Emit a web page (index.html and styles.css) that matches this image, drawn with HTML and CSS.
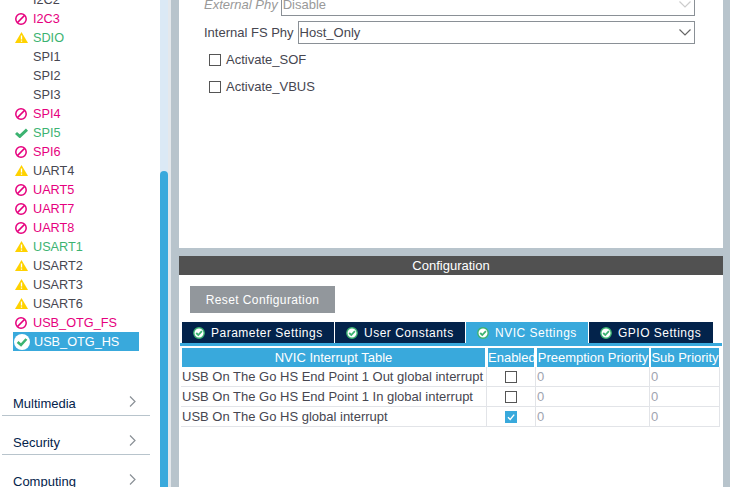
FILE: index.html
```html
<!DOCTYPE html>
<html>

<head>
    <meta charset="utf-8">
    <title>USB_OTG_HS Configuration</title>
    <link rel="stylesheet" href="styles.css">
</head>

<body>
    <svg class="defs" width="0" height="0">
        <symbol id="ban" viewBox="0 0 12 12">
            <circle cx="6" cy="6" r="5.2" fill="none" stroke="#e6007e" stroke-width="1.5" />
            <path d="M2.4 9.6 9.6 2.4" stroke="#e6007e" stroke-width="1.5" />
        </symbol>
        <symbol id="warn" viewBox="0 0 13 11">
            <path d="M6.5 0 13 11H0z" fill="#ffd200" />
            <path d="M6.5 3.5v4M6.5 8.4v1.4" stroke="#fff" stroke-width="1.3" />
        </symbol>
        <symbol id="tick" viewBox="0 0 13 10">
            <path d="M1 5 4.8 8.4 12 1.6" fill="none" stroke="#3cb371" stroke-width="3" />
        </symbol>
        <symbol id="ok" viewBox="0 0 16 16">
            <circle cx="8" cy="8" r="8" fill="#fff" />
            <path d="M3.6 8 7 11 12.4 5" fill="none" stroke="#3cb371" stroke-width="2.6" />
        </symbol>
        <symbol id="tab-ok" viewBox="0 0 12 12">
            <circle cx="6" cy="6" r="5.2" fill="#fff" stroke="#3cb371" stroke-width="1.4" />
            <path d="M3.2 6 5.3 8 8.9 4.2" fill="none" stroke="#3cb371" stroke-width="1.8" />
        </symbol>
        <symbol id="chev" viewBox="0 0 12 7">
            <path d="M.5.5 6 6 11.5.5" fill="none" stroke="currentColor" stroke-width="1.2" />
        </symbol>
        <symbol id="chev-right" viewBox="0 0 7 11">
            <path d="M1 .5 6 5.5 1 10.5" fill="none" stroke="#8a9096" stroke-width="1.2" />
        </symbol>
    </svg>

    <aside class="sidebar">
        <ul class="ip-list">
            <li class="ip-row"><span class="ip-icon"></span>I2C2</li>
            <li class="ip-row pink"><svg class="ip-icon"><use href="#ban" /></svg>I2C3</li>
            <li class="ip-row green"><svg class="ip-icon warn"><use href="#warn" /></svg>SDIO</li>
            <li class="ip-row"><span class="ip-icon"></span>SPI1</li>
            <li class="ip-row"><span class="ip-icon"></span>SPI2</li>
            <li class="ip-row"><span class="ip-icon"></span>SPI3</li>
            <li class="ip-row pink"><svg class="ip-icon"><use href="#ban" /></svg>SPI4</li>
            <li class="ip-row green"><svg class="ip-icon tick"><use href="#tick" /></svg>SPI5</li>
            <li class="ip-row pink"><svg class="ip-icon"><use href="#ban" /></svg>SPI6</li>
            <li class="ip-row"><svg class="ip-icon warn"><use href="#warn" /></svg>UART4</li>
            <li class="ip-row pink"><svg class="ip-icon"><use href="#ban" /></svg>UART5</li>
            <li class="ip-row pink"><svg class="ip-icon"><use href="#ban" /></svg>UART7</li>
            <li class="ip-row pink"><svg class="ip-icon"><use href="#ban" /></svg>UART8</li>
            <li class="ip-row green"><svg class="ip-icon warn"><use href="#warn" /></svg>USART1</li>
            <li class="ip-row"><svg class="ip-icon warn"><use href="#warn" /></svg>USART2</li>
            <li class="ip-row"><svg class="ip-icon warn"><use href="#warn" /></svg>USART3</li>
            <li class="ip-row"><svg class="ip-icon warn"><use href="#warn" /></svg>USART6</li>
            <li class="ip-row pink"><svg class="ip-icon"><use href="#ban" /></svg>USB_OTG_FS</li>
            <li class="ip-row selected"><svg class="ip-icon ok"><use href="#ok" /></svg>USB_OTG_HS</li>
        </ul>
        <div class="category first">Multimedia<svg class="chev-right"><use href="#chev-right" /></svg></div>
        <div class="category">Security<svg class="chev-right"><use href="#chev-right" /></svg></div>
        <div class="category">Computing<svg class="chev-right"><use href="#chev-right" /></svg></div>
    </aside>

    <div class="scrollbar">
        <div class="thumb"></div>
    </div>
    <div class="strip"></div>

    <main class="main">
        <section class="mode-panel">
            <div class="field disabled">
                <label>External Phy</label>
                <div class="select">Disable<svg class="chev"><use href="#chev" /></svg></div>
            </div>
            <div class="field">
                <label>Internal FS Phy</label>
                <div class="select">Host_Only<svg class="chev"><use href="#chev" /></svg></div>
            </div>
            <div class="check-row"><span class="checkbox"></span>Activate_SOF</div>
            <div class="check-row"><span class="checkbox"></span>Activate_VBUS</div>
        </section>

        <section class="config-panel">
            <h2 class="config-title">Configuration</h2>
            <button class="reset-button">Reset Configuration</button>
            <div class="tabs">
                <div class="tab tab-params"><svg class="tab-icon"><use href="#tab-ok" /></svg>Parameter Settings</div>
                <div class="tab tab-const"><svg class="tab-icon"><use href="#tab-ok" /></svg>User Constants</div>
                <div class="tab tab-nvic active"><svg class="tab-icon"><use href="#tab-ok" /></svg>NVIC Settings</div>
                <div class="tab tab-gpio"><svg class="tab-icon"><use href="#tab-ok" /></svg>GPIO Settings</div>
            </div>
            <div class="tab-line"></div>
            <table class="nvic-table">
                <colgroup>
                    <col class="col-name">
                    <col class="col-enabled">
                    <col class="col-pre">
                    <col class="col-sub">
                </colgroup>
                <thead>
                    <tr>
                        <th class="th-name">NVIC Interrupt Table</th>
                        <th class="th-enabled">Enabled</th>
                        <th>Preemption Priority</th>
                        <th>Sub Priority</th>
                    </tr>
                </thead>
                <tbody>
                    <tr>
                        <td>USB On The Go HS End Point 1 Out global interrupt</td>
                        <td class="cell-check"><span class="checkbox"></span></td>
                        <td class="cell-num">0</td>
                        <td class="cell-num">0</td>
                    </tr>
                    <tr>
                        <td>USB On The Go HS End Point 1 In global interrupt</td>
                        <td class="cell-check"><span class="checkbox"></span></td>
                        <td class="cell-num">0</td>
                        <td class="cell-num">0</td>
                    </tr>
                    <tr>
                        <td>USB On The Go HS global interrupt</td>
                        <td class="cell-check">
                            <span class="checkbox checked"><svg viewBox="0 0 12 12"><path d="M3 6.2 5.2 8.4 9.2 3.6" fill="none" stroke="#fff" stroke-width="1.4" /></svg></span>
                        </td>
                        <td class="cell-num">0</td>
                        <td class="cell-num">0</td>
                    </tr>
                </tbody>
            </table>
        </section>
    </main>
</body>

</html>
```

FILE: styles.css
```css
* {
    box-sizing: border-box;
}

html,
body {
    height: 487px;
    margin: 0;
    overflow: hidden;
}

body {
    display: flex;
    background-color: #b8c4cc;
    color: #464650;
    font-family: "Liberation Sans", Arial, sans-serif;
    font-size: 13px;
}

.defs {
    position: absolute;
}

/* left list */
.sidebar {
    width: 160px;
    flex: none;
    background-color: white;
    overflow: hidden;
}

.ip-list {
    list-style: none;
    margin: -10px 0 0;
    padding: 0;
    font-size: 12.7px;
}

.ip-row {
    display: flex;
    align-items: center;
    width: 126px;
    height: 19px;
    margin-left: 13px;
    padding-left: 2px;
}

.ip-icon {
    width: 12px;
    height: 12px;
    flex: none;
    margin-right: 6px;
}

.ip-icon.warn {
    width: 13px;
    height: 11px;
    margin-right: 5px;
}

.ip-icon.tick {
    width: 13px;
    height: 10px;
    margin-right: 5px;
}

.ip-icon.ok {
    width: 16px;
    height: 16px;
    margin-left: -1px;
    margin-right: 4px;
}

.pink {
    color: #e6007e;
}

.green {
    color: #3cb371;
}

.selected {
    background-color: #39a9dc;
    color: white;
}

.category {
    display: flex;
    align-items: center;
    justify-content: space-between;
    height: 39px;
    margin: 0 10px 0 2px;
    padding: 15px 14px 0 11px;
    border-bottom: 1px solid #b8c4cc;
    color: #03234b;
}

.category.first {
    margin-top: 26px;
}

.chev-right {
    width: 7px;
    height: 11px;
    margin-top: -5px;
}

.scrollbar {
    width: 8px;
    flex: none;
    padding-top: 171px;
    background-color: #dbe9f5;
}

.thumb {
    height: 100%;
    border-radius: 4px 4px 0 0;
    background-color: #39a9dc;
}

.strip {
    width: 3px;
    flex: none;
    background-color: #e4e8ec;
}

/* right side */
.main {
    display: flex;
    flex-direction: column;
    width: 544px;
    margin-left: 8px;
    flex: none;
}

.mode-panel {
    height: 248px;
    padding: 0 28px 0 25px;
    background-color: white;
    overflow: hidden;
}

.field {
    display: flex;
    align-items: center;
    gap: 4px;
    height: 23px;
    margin-bottom: 5px;
}

.field:first-child {
    margin-top: -7px;
}

.field + .check-row {
    margin-top: -3px;
}

.field.disabled {
    gap: 3px;
    color: #999;
}

.field.disabled label {
    font-style: italic;
}

.select {
    display: flex;
    align-items: center;
    justify-content: space-between;
    flex: 1;
    height: 23px;
    padding: 0 3px 0 1px;
    border: 1px solid #8a9096;
}

.field.disabled .select {
    color: #999;
}

.chev {
    width: 12px;
    height: 7px;
    color: #666;
}

.field.disabled .chev {
    color: #ccc;
}

.check-row {
    display: flex;
    align-items: center;
    height: 27px;
    margin-left: 5px;
}

.check-row .checkbox {
    margin-right: 5px;
}

.checkbox {
    display: inline-block;
    width: 12px;
    height: 12px;
    border: 1px solid #555;
    background-color: white;
}

.checkbox.checked {
    border: none;
    background-color: #39a9dc;
}

.checkbox svg {
    display: block;
    width: 12px;
    height: 12px;
}

.config-panel {
    flex: 1;
    margin-top: 8px;
    background-color: white;
}

.config-title {
    height: 19px;
    margin: 0 0 11px;
    background-color: #515151;
    color: white;
    font-size: 13px;
    font-weight: normal;
    line-height: 19px;
    text-align: center;
}

.reset-button {
    display: block;
    width: 145px;
    height: 27px;
    margin-left: 11px;
    padding: 0;
    border: none;
    background-color: #92979c;
    color: white;
    font-family: inherit;
    font-size: 12px;
    letter-spacing: 0.4px;
}

.tabs {
    display: flex;
    gap: 1px;
    margin: 9px 0 0 3px;
    font-size: 12px;
}

.tab {
    display: flex;
    align-items: center;
    height: 21px;
    padding-left: 11px;
    background-color: #03234b;
    color: white;
    letter-spacing: 0.5px;
}

.tab.active {
    background-color: #39a9dc;
}

.tab-params {
    width: 152px;
}

.tab-const {
    width: 130px;
}

.tab-nvic {
    width: 122px;
}

.tab-gpio {
    width: 124px;
}

.tab-icon {
    width: 12px;
    height: 12px;
    margin-right: 6px;
}

.tab-line {
    height: 3px;
    margin: 0 1px 2px;
    background-color: #39a9dc;
}

.nvic-table {
    width: 539px;
    margin-left: 2px;
    border-collapse: separate;
    border-spacing: 0;
    table-layout: fixed;
}

.col-name {
    width: 306px;
}

.col-enabled {
    width: 49px;
}

.col-pre {
    width: 114px;
}

.col-sub {
    width: 70px;
}

.nvic-table th {
    height: 19px;
    padding: 0;
    border-left: 1px solid white;
    border-right: 1px solid white;
    background-color: #39a9dc;
    background-clip: padding-box;
    color: white;
    font-weight: normal;
    white-space: nowrap;
}

.nvic-table .th-name,
.nvic-table .th-enabled {
    border-right-width: 2px;
}

.nvic-table td {
    height: 20px;
    padding: 0 0 0 1px;
    border-right: 1px solid #e2e4e8;
    border-bottom: 1px solid #e2e4e8;
    color: #464650;
    white-space: nowrap;
}

.nvic-table .cell-check {
    padding: 0 1px 0 0;
    text-align: center;
    line-height: 0;
}

.nvic-table .cell-num {
    color: #a0a4b0;
}
```
